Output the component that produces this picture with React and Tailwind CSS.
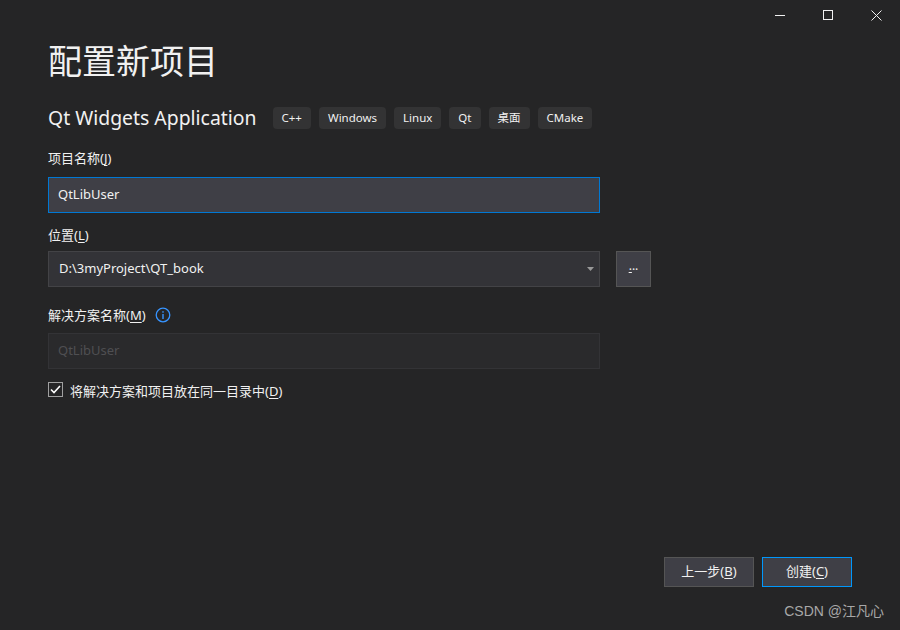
import React from "react";

const font = { fontFamily: '"Segoe UI", "Noto Sans", "Noto Sans CJK SC", sans-serif' };

function Tag({ children }) {
  return (
    <div className="h-[22px] px-[9px] flex items-center rounded-[4px] bg-[#333334] text-[11.5px] text-[#f1f1f1]">
      {children}
    </div>
  );
}

function U({ children }) {
  return <span className="underline underline-offset-2">{children}</span>;
}

export default function App() {
  return (
    <div className="relative w-[900px] h-[630px] bg-[#252526] text-[#f1f1f1] flex flex-col overflow-hidden" style={font}>
      {/* window controls */}
      <div className="flex justify-end h-[30px] shrink-0">
        <div className="w-12 h-[30px] flex items-center justify-center">
          <div className="w-[10px] h-px bg-[#f1f1f1]" />
        </div>
        <div className="w-12 h-[30px] flex items-center justify-center">
          <div className="w-[10px] h-[10px] border border-[#f1f1f1]" />
        </div>
        <div className="w-12 h-[30px] flex items-center justify-center">
          <svg width="11" height="11" viewBox="0 0 11 11">
            <path d="M0.5 0.5 L10.5 10.5 M10.5 0.5 L0.5 10.5" stroke="#f1f1f1" strokeWidth="1" />
          </svg>
        </div>
      </div>

      <div className="pl-12 flex flex-col">
        <div className="mt-[11px] h-[40px] text-[34px] leading-[40px] font-normal">配置新项目</div>

        <div className="mt-[26px] flex items-center h-[22px]">
          <div className="text-[19.4px] leading-[22px] mr-4">Qt Widgets Application</div>
          <div className="flex gap-2">
            <Tag>C++</Tag>
            <Tag>Windows</Tag>
            <Tag>Linux</Tag>
            <Tag>Qt</Tag>
            <Tag>桌面</Tag>
            <Tag>CMake</Tag>
          </div>
        </div>

        <div className="mt-[19px] h-[20px] text-[13px] leading-[20px]">项目名称(<U>J</U>)</div>
        <div className="mt-[9px] w-[552px] h-[36px] bg-[#3f3f46] border border-[#0078d4] flex items-center px-[9px] text-[13px]">
          QtLibUser
        </div>

        <div className="mt-[12px] h-[20px] text-[13px] leading-[20px]">位置(<U>L</U>)</div>
        <div className="mt-[6px] flex gap-4">
          <div className="w-[552px] h-[36px] bg-[#333337] border border-[#434346] flex items-center justify-between pl-[10px] pr-[5px] text-[13px]">
            <span>D:\3myProject\QT_book</span>
            <svg width="7" height="4" viewBox="0 0 7 4">
              <path d="M0 0 H7 L3.5 4 Z" fill="#999999" />
            </svg>
          </div>
          <div className="w-[35px] h-[36px] bg-[#3f3f46] border border-[#555555] flex items-center justify-center text-[12px] leading-none">
            <span className="-mt-[6px]"><U>.</U>..</span>
          </div>
        </div>

        <div className="mt-[18px] h-[20px] flex items-center gap-[9px]">
          <span className="text-[13px] leading-[20px]">解决方案名称(<U>M</U>)</span>
          <svg width="16" height="16" viewBox="0 0 16 16">
            <circle cx="8" cy="8" r="6.8" fill="none" stroke="#3794ff" strokeWidth="1.3" />
            <rect x="7.3" y="7" width="1.4" height="5" fill="#3794ff" />
            <rect x="7.3" y="4.2" width="1.4" height="1.5" fill="#3794ff" />
          </svg>
        </div>
        <div className="mt-[8px] w-[552px] h-[36px] bg-[#2a2a2c] border border-[#333336] flex items-center px-[9px] text-[13px] text-[#4f4f52]">
          QtLibUser
        </div>

        <div className="mt-[12px] flex items-center gap-[7px] h-[16px]">
          <div className="w-[15px] h-[15px] border border-[#a0a0a0] flex items-center justify-center">
            <svg width="11" height="9" viewBox="0 0 11 9">
              <path d="M1 4.5 L4 7.5 L10 1" fill="none" stroke="#ffffff" strokeWidth="1.6" />
            </svg>
          </div>
          <span className="text-[13px] leading-[20px] mt-[4px]">将解决方案和项目放在同一目录中(<U>D</U>)</span>
        </div>
      </div>

      <div className="mt-auto mb-[43px] flex justify-end gap-2 pr-12">
        <div className="w-[90px] h-[30px] bg-[#3f3f46] border border-[#555555] flex items-center justify-center text-[13px]">
          上一步(<U>B</U>)
        </div>
        <div className="w-[90px] h-[30px] bg-[#3f3f46] border border-[#0097fb] flex items-center justify-center text-[13px]">
          创建(<U>C</U>)
        </div>
      </div>

      <div className="absolute right-[16px] bottom-[8px] text-[14px] text-[#a8a8a8]" style={{ fontFamily: '"Liberation Sans", "Noto Sans CJK SC", sans-serif' }}>
        CSDN @江凡心
      </div>
    </div>
  );
}
